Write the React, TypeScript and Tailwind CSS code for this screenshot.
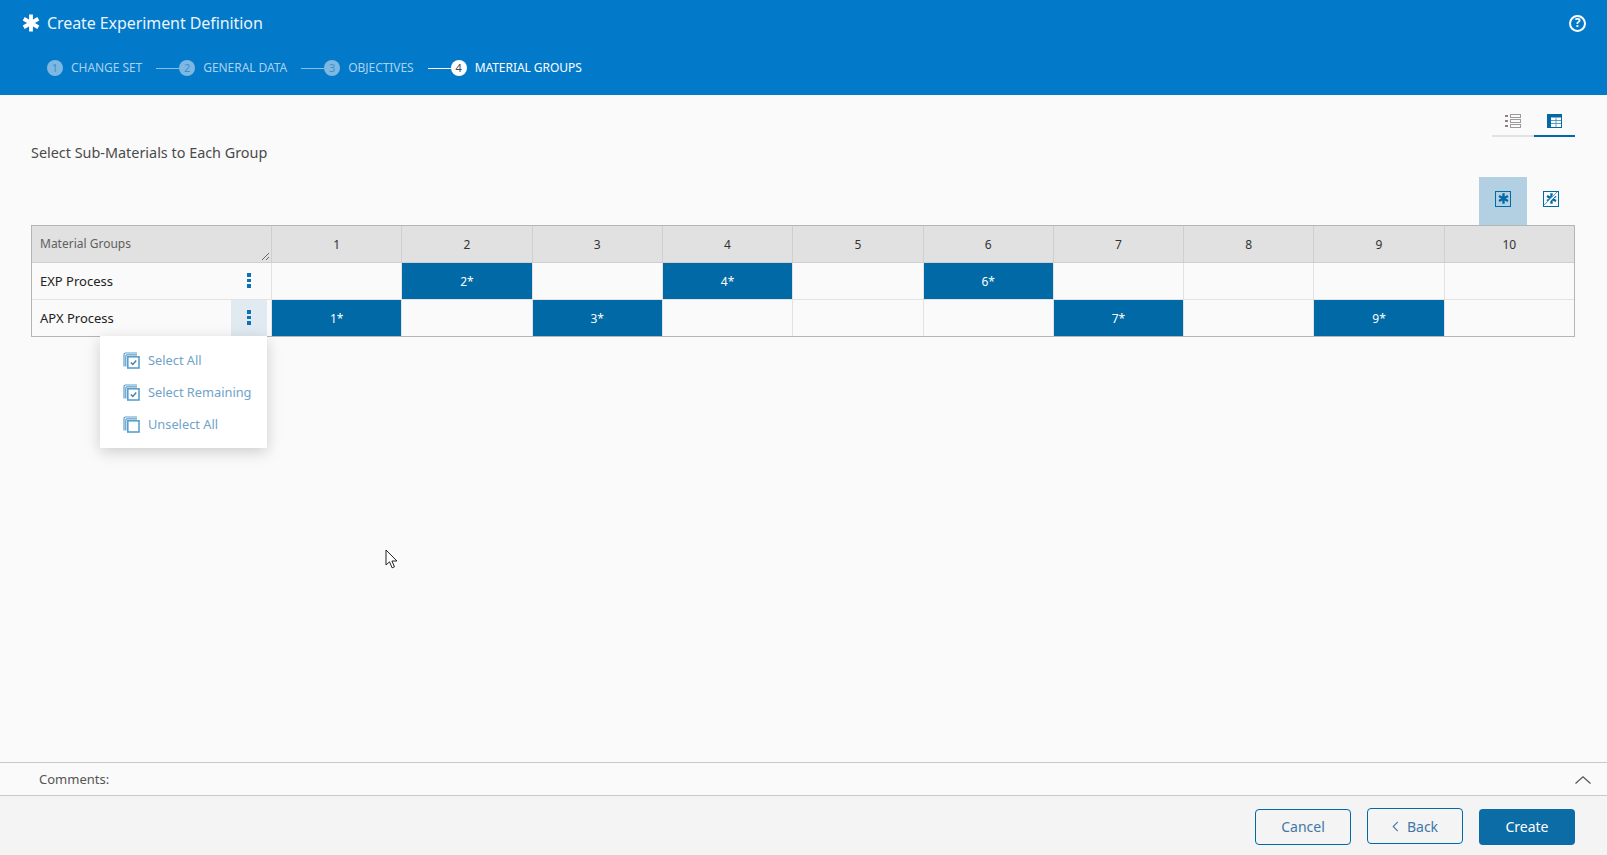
import React from 'react';

const font = { fontFamily: '"Noto Sans", sans-serif' };

const steps = [
  { n: 1, label: 'CHANGE SET' },
  { n: 2, label: 'GENERAL DATA' },
  { n: 3, label: 'OBJECTIVES' },
  { n: 4, label: 'MATERIAL GROUPS', active: true },
];

const columns = [1, 2, 3, 4, 5, 6, 7, 8, 9, 10];
const rows = [
  { name: 'EXP Process', selected: [2, 4, 6], height: 'h-[37px] border-b border-[#e2e2e2]' },
  { name: 'APX Process', selected: [1, 3, 7, 9], open: true, height: 'h-[36px]' },
];

const AsteriskGlyph = ({ className }: { className?: string }) => (
  <svg viewBox="0 0 16 16" className={className} fill="none" stroke="currentColor" strokeWidth="3.4">
    <path d="M8 0.5v15M1.5 4.2l13 7.6M14.5 4.2l-13 7.6" />
  </svg>
);

const StackIcon = ({ checked }: { checked?: boolean }) => (
  <svg viewBox="0 0 17 17" className="w-[17px] h-[17px] text-[#5b9fcb]" fill="none" stroke="currentColor">
    <path d="M1 14.5V2.5Q1 1 2.5 1H14" strokeWidth="1.2" />
    <path d="M2.8 14.5V3.8Q2.8 2.8 3.8 2.8H14" strokeWidth="1.2" />
    <rect x="4.8" y="4.8" width="11.2" height="11.2" strokeWidth="1.6" />
    {checked && <path d="M7.8 10.5l2 2 3.4-4" stroke="#3f7fae" strokeWidth="1.4" />}
  </svg>
);

const Kebab = () => (
  <span className="flex flex-col gap-[2px]">
    <span className="w-[4px] h-[4px] bg-[#0b73b5]" />
    <span className="w-[4px] h-[3px] bg-[#0b73b5]" />
    <span className="w-[4px] h-[4px] bg-[#0b73b5]" />
  </span>
);

const Stepper = () => (
  <div className="flex items-center pl-[47px] h-[36px] mt-[4px]">
    {steps.map((s, i) => (
      <div key={s.n} className="flex items-center">
        {i > 0 && <span className={`h-px w-[23px] ml-[14px] ${s.active ? 'bg-white' : 'bg-[#8dbfe3]'}`} />}
        <span
          className={`flex items-center justify-center w-[16px] h-[16px] rounded-full text-[11px] ${
            s.active ? 'bg-white text-[#37474f]' : 'bg-[#7db8e2] text-[#3d8fca]'
          }`}
        >
          {s.n}
        </span>
        <span className={`ml-[8px] text-[12px] tracking-[-0.05px] ${s.active ? 'text-white' : 'text-[#a9d2ef]'}`}>{s.label}</span>
      </div>
    ))}
  </div>
);

const App: React.FC = () => {
  return (
    <div className="h-[855px] w-full flex flex-col bg-[#fafafa] overflow-hidden relative" style={font}>
      <header className="h-[95px] bg-[#0279c9] text-white shrink-0">
        <div className="flex items-center justify-between h-[46px] pl-[22px] pr-[21px]">
          <div className="flex items-center gap-[7px]">
            <AsteriskGlyph className="w-[18px] h-[18px]" />
            <span className="text-[16px] tracking-[-0.08px] text-[#e9f4fb]">Create Experiment Definition</span>
          </div>
          <span className="flex items-center justify-center w-[17px] h-[17px] shrink-0 rounded-full border-2 border-white text-[12px] font-bold leading-none">
            ?
          </span>
        </div>
        <Stepper />
      </header>

      <main className="flex-1 relative pl-[31px] pr-[32px] min-h-0">
        <div className="flex justify-between items-start pt-[10px]">
          <h2 className="mt-[37px] text-[14.4px] text-[#4a4a4a]">Select Sub-Materials to Each Group</h2>
          <div className="flex">
            <div className="w-[42px] h-[32px] border-b-2 border-[#e2e2e2] flex items-center justify-center pt-[2px]">
              <svg viewBox="0 0 16 14" className="w-[16px] h-[14px]" fill="none">
                <path d="M0 2h3M0 7h3M0 12h3" stroke="#6b5b55" strokeWidth="1.6" />
                <rect x="5.5" y="0.5" width="10" height="3" stroke="#9b9b9b" />
                <rect x="5.5" y="5.5" width="10" height="3" stroke="#9b9b9b" />
                <rect x="5.5" y="10.5" width="10" height="3" stroke="#9b9b9b" />
              </svg>
            </div>
            <div className="w-[41px] h-[32px] border-b-2 border-[#0069a6] flex items-center justify-center pt-[2px]">
              <svg viewBox="0 0 15 14" className="w-[15px] h-[14px]">
                <rect width="15" height="14" fill="#0069a6" />
                <path d="M4 3.5h10v9.5H4z" fill="#fff" />
                <path d="M4 6.5h10M4 9.5h10M9 3.5v9.5" stroke="#4f93bd" strokeWidth="0.9" />
              </svg>
            </div>
          </div>
        </div>

        <div className="flex justify-end items-center h-[48px] mt-[13px]">
          <div className="w-[48px] h-[48px] pb-[4px] bg-[#b3d0e2] flex items-center justify-center">
            <span className="w-[16px] h-[16px] border border-[#0069a6] flex items-center justify-center text-[#0069a6]">
              <AsteriskGlyph className="w-[11px] h-[11px]" />
            </span>
          </div>
          <div className="w-[48px] h-[48px] pb-[4px] flex items-center justify-center">
            <span className="relative w-[16px] h-[16px] border border-[#0069a6] flex items-center justify-center text-[#0069a6]">
              <AsteriskGlyph className="w-[11px] h-[11px]" />
              <svg viewBox="0 0 16 16" className="absolute inset-0 w-full h-full" fill="none">
                <path d="M0 16L16 0" stroke="#fff" strokeWidth="2.4" />
                <path d="M0 15L15 0" stroke="#0069a6" strokeWidth="0.8" />
              </svg>
            </span>
          </div>
        </div>

        <div className="border border-[#b5b5b5] text-[12px]">
          <div className="grid grid-cols-[239px_repeat(10,minmax(0,1fr))] h-[37px] bg-[#e1e1e1] border-b border-[#cfcfcf]">
            <div className="relative flex items-center pl-[8px] text-[#5f5f5f]">
              Material Groups
              <svg viewBox="0 0 9 9" className="absolute right-[1px] bottom-[1px] w-[9px] h-[9px]" fill="none" stroke="#666">
                <path d="M1 8l7-7M5 8l3-3" />
              </svg>
            </div>
            {columns.map((c) => (
              <div key={c} className="flex items-center justify-center pt-[2px] border-l border-[#cfcfcf] text-[#333]">
                {c}
              </div>
            ))}
          </div>
          {rows.map((r) => (
            <div key={r.name} className={`grid grid-cols-[239px_repeat(10,minmax(0,1fr))] ${r.height}`}>
              <div className="flex items-center justify-between pl-[8px] pr-[4px] text-[13px] text-[#222]">
                <span className="pt-[2px]">{r.name}</span>
                <span className={`flex items-center justify-center w-[36px] h-full ${r.open ? 'bg-[#e1eaf1]' : ''}`}>
                  <Kebab />
                </span>
              </div>
              {columns.map((c) => (
                <div
                  key={c}
                  className={`flex items-center justify-center pt-[2px] border-l border-[#e2e2e2] ${
                    r.selected.includes(c) ? 'bg-[#0069a6] text-white' : ''
                  }`}
                >
                  {r.selected.includes(c) ? `${c}*` : ''}
                </div>
              ))}
            </div>
          ))}
        </div>

        {/* row menu */}
        <div className="absolute left-[100px] top-[241px] w-[167px] h-[112px] bg-white shadow-[0_4px_14px_rgba(0,0,0,0.18)] pl-[23px] pt-[16px] flex flex-col gap-[15px] text-[12.8px] text-[#6fa3c9] z-10">
          <div className="flex items-center gap-[8px] h-[17px]"><StackIcon checked />Select All</div>
          <div className="flex items-center gap-[8px] h-[17px]"><StackIcon checked />Select Remaining</div>
          <div className="flex items-center gap-[8px] h-[17px]"><StackIcon />Unselect All</div>
        </div>

        {/* mouse cursor */}
        <svg viewBox="0 0 13 20" className="absolute left-[385px] top-[454px] w-[13px] h-[20px] z-20" fill="#fff" stroke="#222">
          <path d="M1 1v15l3.5-3.2 2.6 6 2.4-1-2.6-5.8h5z" />
        </svg>
      </main>

      <div className="h-[34px] shrink-0 flex items-center justify-between border-y border-[#c8c8c8] pl-[39px] pr-[16px] pt-[1px] text-[13px] text-[#555]">
        Comments:
        <svg viewBox="0 0 16 8" className="w-[16px] h-[8px]" fill="none" stroke="#555" strokeWidth="1.2">
          <path d="M0.5 7.5L8 0.8l7.5 6.7" />
        </svg>
      </div>

      <footer className="h-[59px] shrink-0 bg-[#f4f4f4] flex items-center justify-end gap-[16px] pr-[32px] pt-[2px] text-[14px]">
        <button className="w-[96px] h-[36px] rounded-[4px] border border-[#0069a6] text-[#3d78a8]">Cancel</button>
        <button className="w-[96px] h-[36px] mb-[2px] pt-[2px] rounded-[4px] border border-[#0069a6] text-[#3d78a8] flex items-center justify-center gap-[8px]">
          <svg viewBox="0 0 7 12" className="w-[7px] h-[11px]" fill="none" stroke="#3d78a8" strokeWidth="1.2">
            <path d="M6 1L1 6l5 5" />
          </svg>
          Back
        </button>
        <button className="w-[96px] h-[36px] rounded-[4px] bg-[#0c6ca6] text-white">Create</button>
      </footer>
    </div>
  );
};

export default App;
